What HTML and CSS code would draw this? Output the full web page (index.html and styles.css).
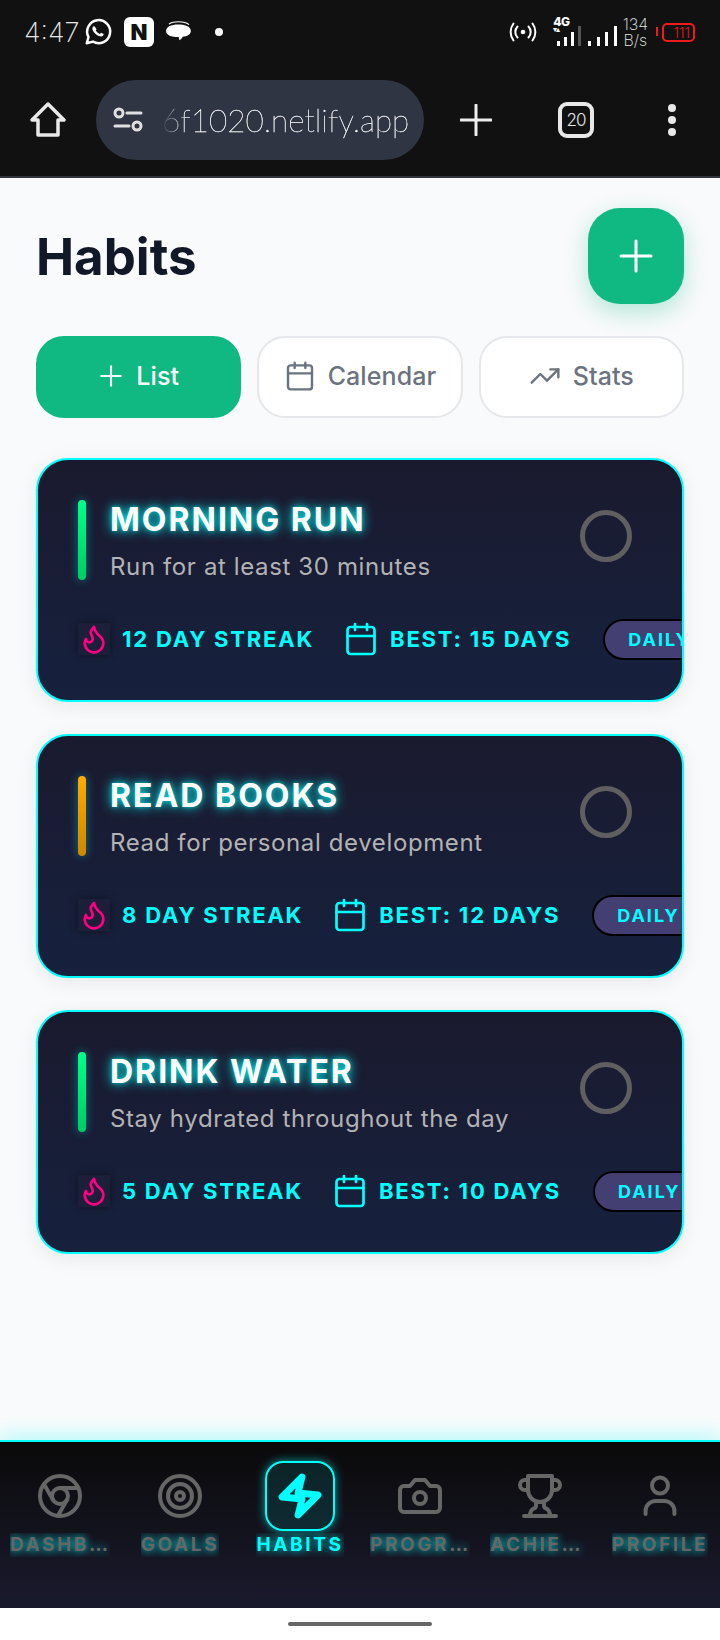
FILE: index.html
```html
<!DOCTYPE html>
<html lang="en">
<head>
  <meta charset="UTF-8">
  <meta name="viewport" content="width=device-width, initial-scale=1.0">
  <title>Habits</title>
  <link rel="stylesheet" href="styles.css">
</head>
<body>
  <!-- phone status bar -->
  <div class="status-bar">
    <div class="status-left">
      <span class="clock">4:47</span>
      <svg class="st-whatsapp" viewBox="0 0 24 24"><path class="line" d="M3 21l1.400-5A9.200 9.200 0 1 1 8 19.700z"/><path class="solid" d="M9 7.200c-.3 0-.8.2-1.100.7-.5.8-.6 2 .3 3.400 1 1.600 2.600 3.100 4.600 3.900 1.600.6 2.700.3 3.300-.4.400-.5.500-1 .4-1.200l-2.100-1.100-.9 1.100c-1.400-.5-2.600-1.600-3.300-2.900l.7-.9z"/></svg>
      <span class="st-notion">N</span>
      <svg class="st-chat" viewBox="0 0 26 24"><path class="line-thin" d="M4 4.500C7 2 18 1.500 22 5"/><path class="solid" d="M12 5c6 0 12 1.600 12 6 0 3.200-3.500 5-7.500 5.400-.8 1.200-1.700 2.600-3 3.200-.5-1-.7-2-.7-3C6 16.600 1 15 1 11 1 7 6 5 12 5z"/></svg>
      <span class="st-dot"></span>
    </div>
    <div class="status-right">
      <svg class="st-hotspot" viewBox="0 0 30 20"><circle cx="15" cy="10" r="2.300"/><path d="M9.500 4.500a8 8 0 0 0 0 11M20.500 4.500a8 8 0 0 1 0 11M5.500 1.500a14 14 0 0 0 0 17M24.500 1.500a14 14 0 0 1 0 17"/></svg>
      <div class="sim">
        <span class="sim-type">4G</span>
        <span class="sim-arrows">▾▴</span>
        <div class="bars">
          <i class="h1"></i><i class="h2"></i><i class="h3"></i><i class="h4 off"></i>
        </div>
      </div>
      <div class="bars bars-wide">
        <i class="h1"></i><i class="h2"></i><i class="h3"></i><i class="h4"></i>
      </div>
      <div class="speed"><span>134</span><span>B/s</span></div>
      <div class="battery"><span class="battery-fill">111</span></div>
    </div>
  </div>

  <!-- browser toolbar -->
  <div class="toolbar">
    <svg class="tb-home" viewBox="0 0 36 36"><path d="M2 18 18 2l16 16h-6v15H8V18z"/></svg>
    <div class="url-pill">
      <svg class="tb-tune" viewBox="0 0 32 28"><circle cx="7" cy="7" r="4"/><path d="M15 7h14M3 20h14"/><circle cx="25" cy="20" r="4"/></svg>
      <span class="url-text">6f1020.netlify.app</span>
    </div>
    <svg class="tb-plus" viewBox="0 0 32 32"><path d="M16 1v30M1 16h30"/></svg>
    <div class="tab-count">20</div>
    <div class="tb-menu"><i></i><i></i><i></i></div>
  </div>

  <main class="page">
    <header class="page-head">
      <h1>Habits</h1>
      <button class="add-btn">
        <svg viewBox="0 0 24 24"><path d="M12 2v20M2 12h20"/></svg>
      </button>
    </header>

    <div class="tabs">
      <button class="tab tab-active">
        <svg class="tab-plus" viewBox="0 0 24 24"><path d="M12 3v18M3 12h18"/></svg>
        List
      </button>
      <button class="tab">
        <svg viewBox="0 0 24 24"><rect x="3" y="4" width="18" height="18" rx="2"/><path d="M16 2v4M8 2v4M3 10h18"/></svg>
        Calendar
      </button>
      <button class="tab">
        <svg viewBox="0 0 24 24"><path d="M22 7l-8.500 8.500-5-5L2 17"/><path d="M16 7h6v6"/></svg>
        Stats
      </button>
    </div>

    <section class="habit">
      <div class="habit-top">
        <span class="accent accent-green"></span>
        <div class="habit-text">
          <h2>Morning Run</h2>
          <p>Run for at least 30 minutes</p>
        </div>
        <button class="check"><span></span></button>
      </div>
      <div class="habit-stats">
        <span class="flame"><svg viewBox="0 0 24 24"><path d="M8.500 14.500A2.500 2.500 0 0 0 11 12c0-1.380-.5-2-1-3-1.072-2.143-.224-4.054 2-6 .5 2.500 2 4.900 4 6.500 2 1.600 3 3.500 3 5.500a7 7 0 1 1-14 0c0-1.153.433-2.294 1-3a2.500 2.500 0 0 0 2.500 2.500z"/></svg></span>
        <span class="stat-label">12 Day Streak</span>
        <svg class="stat-cal" viewBox="0 0 24 24"><rect x="3" y="4" width="18" height="18" rx="2"/><path d="M16 2v4M8 2v4M3 10h18"/></svg>
        <span class="stat-label">Best: 15 Days</span>
        <span class="freq">Daily</span>
      </div>
    </section>

    <section class="habit">
      <div class="habit-top">
        <span class="accent accent-amber"></span>
        <div class="habit-text">
          <h2>Read Books</h2>
          <p>Read for personal development</p>
        </div>
        <button class="check"><span></span></button>
      </div>
      <div class="habit-stats">
        <span class="flame"><svg viewBox="0 0 24 24"><path d="M8.500 14.500A2.500 2.500 0 0 0 11 12c0-1.380-.5-2-1-3-1.072-2.143-.224-4.054 2-6 .5 2.500 2 4.900 4 6.500 2 1.600 3 3.500 3 5.500a7 7 0 1 1-14 0c0-1.153.433-2.294 1-3a2.500 2.500 0 0 0 2.500 2.500z"/></svg></span>
        <span class="stat-label">8 Day Streak</span>
        <svg class="stat-cal" viewBox="0 0 24 24"><rect x="3" y="4" width="18" height="18" rx="2"/><path d="M16 2v4M8 2v4M3 10h18"/></svg>
        <span class="stat-label">Best: 12 Days</span>
        <span class="freq">Daily</span>
      </div>
    </section>

    <section class="habit">
      <div class="habit-top">
        <span class="accent accent-green"></span>
        <div class="habit-text">
          <h2>Drink Water</h2>
          <p>Stay hydrated throughout the day</p>
        </div>
        <button class="check"><span></span></button>
      </div>
      <div class="habit-stats">
        <span class="flame"><svg viewBox="0 0 24 24"><path d="M8.500 14.500A2.500 2.500 0 0 0 11 12c0-1.380-.5-2-1-3-1.072-2.143-.224-4.054 2-6 .5 2.500 2 4.900 4 6.500 2 1.600 3 3.500 3 5.500a7 7 0 1 1-14 0c0-1.153.433-2.294 1-3a2.500 2.500 0 0 0 2.500 2.500z"/></svg></span>
        <span class="stat-label">5 Day Streak</span>
        <svg class="stat-cal" viewBox="0 0 24 24"><rect x="3" y="4" width="18" height="18" rx="2"/><path d="M16 2v4M8 2v4M3 10h18"/></svg>
        <span class="stat-label">Best: 10 Days</span>
        <span class="freq">Daily</span>
      </div>
    </section>
  </main>

  <nav class="tabbar">
    <a class="nav-item">
      <span class="nav-icon"><svg viewBox="0 0 24 24"><circle cx="12" cy="12" r="10"/><circle cx="12" cy="12" r="4"/><path d="M21.170 8H12M3.950 6.060 8.540 14M10.880 21.940 15.460 14"/></svg></span>
      <span class="nav-label">Dashboard</span>
    </a>
    <a class="nav-item">
      <span class="nav-icon"><svg viewBox="0 0 24 24"><circle cx="12" cy="12" r="10"/><circle cx="12" cy="12" r="6"/><circle cx="12" cy="12" r="2"/></svg></span>
      <span class="nav-label">Goals</span>
    </a>
    <a class="nav-item nav-active">
      <span class="nav-icon"><svg viewBox="0 0 24 24"><path d="M13 2.500 3 12.500l10 1-2 8 10-10-10-1z"/></svg></span>
      <span class="nav-label">Habits</span>
    </a>
    <a class="nav-item">
      <span class="nav-icon"><svg viewBox="0 0 24 24"><path d="M14.500 4h-5L7 7H4a2 2 0 0 0-2 2v9a2 2 0 0 0 2 2h16a2 2 0 0 0 2-2V9a2 2 0 0 0-2-2h-3z"/><circle cx="12" cy="13" r="3"/></svg></span>
      <span class="nav-label">Progress</span>
    </a>
    <a class="nav-item">
      <span class="nav-icon"><svg viewBox="0 0 24 24"><path d="M6 9H4.500a2.500 2.500 0 0 1 0-5H6M18 9h1.500a2.500 2.500 0 0 0 0-5H18M4 22h16M10 14.660V17c0 .55-.47.98-.97 1.210C7.850 18.750 7 20.240 7 22M14 14.660V17c0 .55.47.98.97 1.210C16.150 18.750 17 20.240 17 22M18 2H6v7a6 6 0 0 0 12 0z"/></svg></span>
      <span class="nav-label">Achievements</span>
    </a>
    <a class="nav-item">
      <span class="nav-icon"><svg viewBox="0 0 24 24"><path d="M4.800 21v-1.500a5 5 0 0 1 5-5h4.400a5 5 0 0 1 5 5V21"/><circle cx="12" cy="6.800" r="4"/></svg></span>
      <span class="nav-label">Profile</span>
    </a>
  </nav>

  <div class="home-bar"><span></span></div>
</body>
</html>
```

FILE: styles.css
```css
* {
  box-sizing: border-box;
}
body {
  margin: 0;
  width: 720px;
  height: 1640px;
  overflow: hidden;
  display: flex;
  flex-direction: column;
  font-family: Inter, "Noto Sans", sans-serif;
  background: #f9fafb;
}
button {
  font-family: inherit;
  cursor: pointer;
}
svg {
  display: block;
  fill: none;
  stroke-linecap: round;
  stroke-linejoin: round;
}

/* status bar */
.status-bar {
  height: 64px;
  padding: 0 25px 0 24px;
  background: #111;
  color: #e8e8e8;
  display: flex;
  justify-content: space-between;
  align-items: center;
}
.status-left, .status-right {
  display: flex;
  align-items: center;
}
.clock {
  font-size: 27px;
  font-weight: 200;
  width: 60px;
}
.st-whatsapp {
  width: 30px;
  height: 30px;
  margin-left: -1px;
}
.st-whatsapp .line {
  stroke: #fff;
  stroke-width: 2;
}
.solid {
  fill: #fff;
}
.line-thin {
  stroke: #fff;
  stroke-width: 1;
}
.st-notion {
  width: 30px;
  height: 30px;
  margin-left: 11px;
  border-radius: 6px;
  background: #fff;
  color: #111;
  font-size: 22px;
  font-weight: 900;
  line-height: 30px;
  text-align: center;
}
.st-chat {
  width: 28px;
  height: 26px;
  margin-left: 11px;
}
.st-dot {
  width: 8px;
  height: 8px;
  border-radius: 50%;
  background: #fff;
  margin-left: 22px;
}
.st-hotspot {
  width: 30px;
  height: 20px;
  margin-left: 2px;
  stroke: #fff;
  stroke-width: 2;
}
.st-hotspot circle {
  fill: #fff;
  stroke: none;
}
.sim {
  margin-left: 15px;
  width: 28px;
  position: relative;
  height: 28px;
}
.sim-type {
  position: absolute;
  left: 0;
  top: -4px;
  font-size: 12px;
  font-weight: 800;
  letter-spacing: -0.5px;
  color: #fff;
}
.sim-arrows {
  position: absolute;
  left: 0;
  top: 7px;
  font-size: 8px;
  line-height: 8px;
  letter-spacing: -1px;
  color: #fff;
}
.bars {
  display: flex;
  align-items: flex-end;
  gap: 4px;
  height: 28px;
  justify-content: flex-end;
}
.bars i {
  width: 3px;
  background: #fff;
}
.bars .h1 { height: 5px; }
.bars .h2 { height: 9px; }
.bars .h3 { height: 14px; }
.bars .h4 { height: 20px; }
.bars .off { background: #555; }
.bars-wide {
  margin-left: 7px;
  gap: 5.500px;
}
.speed {
  margin-left: 6px;
  display: flex;
  flex-direction: column;
  align-items: center;
  font-size: 16px;
  font-weight: 200;
  line-height: 16px;
}
.battery {
  margin-left: 14px;
  width: 33px;
  height: 19px;
  border: 2px solid #f01c1c;
  border-radius: 5px;
  position: relative;
  color: #e01c1c;
  font-size: 14px;
  line-height: 15px;
  font-weight: 300;
  text-align: right;
  padding-right: 3px;
}
.battery::before {
  content: "";
  position: absolute;
  left: -8px;
  top: 2px;
  width: 2px;
  height: 9px;
  background: #f01c1c;
}

/* browser toolbar */
.toolbar {
  height: 114px;
  background: #111;
  border-bottom: 2px solid #30343c;
  display: flex;
  align-items: center;
  padding: 0 0 0 30px;
}
.tb-home {
  width: 36px;
  height: 36px;
  stroke: #e8e8e8;
  stroke-width: 3.500;
}
.url-pill {
  margin-left: 30px;
  width: 328px;
  height: 80px;
  border-radius: 40px;
  background: #2f3542;
  display: flex;
  align-items: center;
  padding-left: 16px;
  overflow: hidden;
}
.tb-tune {
  width: 32px;
  height: 28px;
  flex: none;
  stroke: #e0e0e0;
  stroke-width: 3;
}
.url-text {
  margin-left: 18px;
  font-family: Lato, sans-serif;
  font-weight: 200;
  font-size: 31.500px;
  color: #fff;
  white-space: nowrap;
  -webkit-text-stroke: 0.3px #fff;
  -webkit-mask-image: linear-gradient(to right, transparent, #000 24px);
  mask-image: linear-gradient(to right, transparent, #000 24px);
}
.tb-plus {
  width: 32px;
  height: 32px;
  margin-left: 36px;
  stroke: #eee;
  stroke-width: 3;
}
.tab-count {
  margin-left: 66px;
  width: 36px;
  height: 36px;
  border: 4px solid #e8e8e8;
  border-radius: 9px;
  color: #e8e8e8;
  font-size: 17px;
  font-weight: 300;
  line-height: 28px;
  text-align: center;
  letter-spacing: -1px;
}
.tb-menu {
  margin-left: 74px;
  display: flex;
  flex-direction: column;
  gap: 4px;
}
.tb-menu i {
  width: 8px;
  height: 8px;
  border-radius: 50%;
  background: #e8e8e8;
}

/* page */
.page {
  flex: 1;
  min-height: 0;
  padding: 30px 36px 0;
}
.page-head {
  display: flex;
  justify-content: space-between;
  align-items: center;
}
h1 {
  margin: 0;
  font-size: 51px;
  font-weight: 700;
  color: #111827;
}
.add-btn {
  width: 96px;
  height: 96px;
  border: none;
  border-radius: 32px;
  background: #10b981;
  box-shadow: 0 8px 24px rgba(16, 185, 129, 0.3);
  display: flex;
  align-items: center;
  justify-content: center;
}
.add-btn svg {
  width: 36px;
  height: 36px;
  stroke: #fff;
  stroke-width: 2;
}
.tabs {
  display: grid;
  grid-template-columns: repeat(3, 1fr);
  gap: 16px;
  margin-top: 32px;
  margin-bottom: 40px;
}
.tab {
  height: 82px;
  padding-bottom: 3px;
  border: 2px solid #e5e7eb;
  border-radius: 28px;
  background: #fff;
  color: #6b7280;
  font-size: 25px;
  letter-spacing: 0.1px;
  font-weight: 500;
  display: flex;
  align-items: center;
  justify-content: center;
  gap: 12px;
}
.tab svg {
  width: 32px;
  height: 32px;
  stroke: currentColor;
  stroke-width: 1.800;
}
.tab .tab-plus {
  width: 26px;
  height: 26px;
  stroke-width: 2;
}
.tab-active {
  background: #10b981;
  border-color: #10b981;
  color: #fff;
}

/* habit cards */
.habit {
  height: 244px;
  margin-bottom: 32px;
  padding: 40px 0 0 40px;
  border: 2px solid #0ff;
  border-radius: 32px;
  background: linear-gradient(180deg, #1a1a2e, #16213e);
  box-shadow: 0 4px 20px rgba(0, 0, 0, 0.08);
  overflow: hidden;
}
.habit-top {
  display: flex;
  height: 80px;
  padding-right: 40px;
}
.accent {
  width: 8px;
  height: 80px;
  border-radius: 4px;
  margin-right: 24px;
  flex: none;
  box-shadow: 0 0 10px rgba(0, 255, 255, 0.4);
}
.accent-green {
  background: linear-gradient(180deg, #00ff88, #00cc66);
}
.accent-amber {
  background: linear-gradient(180deg, #ffaa00, #cc8800);
}
.habit-text {
  flex: 1;
  padding-top: 1px;
}
h2 {
  margin: 0;
  font-size: 32px;
  line-height: 38px;
  font-weight: 700;
  letter-spacing: 2px;
  text-transform: uppercase;
  color: #fff;
  text-shadow: 0 0 12px #0ff, 0 0 4px rgba(0, 255, 255, 0.5);
}
.habit-text p {
  margin: 12px 0 0;
  font-size: 24px;
  line-height: 32px;
  letter-spacing: 0.62px;
  color: #b3b3b3;
}
.check {
  width: 72px;
  height: 72px;
  padding: 0;
  border: none;
  background: none;
  display: flex;
  align-items: center;
  justify-content: center;
}
.check span {
  width: 52px;
  height: 52px;
  border: 5px solid #5f5f5f;
  border-radius: 50%;
}
.habit-stats {
  margin-top: 38px;
  height: 42px;
  display: flex;
  align-items: center;
  white-space: nowrap;
}
.flame {
  width: 32px;
  height: 32px;
  background: #1b1f3a;
  box-shadow: 0 0 8px rgba(0, 0, 0, 0.4);
  display: flex;
  align-items: center;
  justify-content: center;
  flex: none;
}
.flame svg {
  width: 32px;
  height: 32px;
  stroke: #ff0080;
  stroke-width: 2;
}
.stat-label {
  margin-left: 12px;
  font-size: 22px;
  font-weight: 700;
  letter-spacing: 1.800px;
  text-transform: uppercase;
  color: #0ff;
}
.stat-cal {
  width: 36px;
  height: 36px;
  margin-left: 29px;
  stroke: #0ff;
  stroke-width: 1.800;
  flex: none;
}
.stat-cal + .stat-label {
  margin-left: 11px;
}
.freq {
  margin-left: 32px;
  height: 41px;
  padding: 0 23px;
  border: 2px solid #000;
  border-radius: 21px;
  background: #433f72;
  font-size: 18px;
  font-weight: 700;
  letter-spacing: 2px;
  line-height: 37px;
  text-transform: uppercase;
  color: #0ff;
  flex: none;
}

/* bottom navigation */
.tabbar {
  height: 168px;
  border-top: 2px solid #0ff;
  background: linear-gradient(180deg, #0a0a0a, #1a1a2e);
  box-shadow: 0 -4px 20px rgba(0, 255, 255, 0.3);
  display: grid;
  grid-template-columns: repeat(6, 120px);
  position: relative;
}
.nav-item {
  display: flex;
  flex-direction: column;
  align-items: center;
  padding-top: 19px;
}
.nav-icon {
  width: 70px;
  height: 70px;
  display: flex;
  align-items: center;
  justify-content: center;
}
.nav-icon svg {
  width: 48px;
  height: 48px;
  stroke: #666;
  stroke-width: 2;
}
.nav-label {
  margin-top: 2px;
  max-width: 100px;
  height: 24px;
  font-size: 19px;
  line-height: 24px;
  font-weight: 700;
  letter-spacing: 2.600px;
  text-transform: uppercase;
  color: #666;
  text-shadow: 0 0 10px #0ff;
  overflow: hidden;
  white-space: nowrap;
  text-overflow: ellipsis;
}
.nav-active .nav-icon {
  border: 2px solid #0ff;
  border-radius: 18px;
  background: rgba(0, 255, 255, 0.1);
  box-shadow: 0 0 10px rgba(0, 255, 255, 0.6);
}
.nav-active .nav-icon svg {
  stroke: #0ff;
  stroke-width: 3.400;
}
.nav-active .nav-label {
  color: #0ff;
}
.home-bar {
  height: 32px;
  background: #fff;
  display: flex;
  justify-content: center;
  align-items: center;
  position: relative;
}
.home-bar span {
  width: 144px;
  height: 4px;
  border-radius: 2px;
  background: #666;
}
```
